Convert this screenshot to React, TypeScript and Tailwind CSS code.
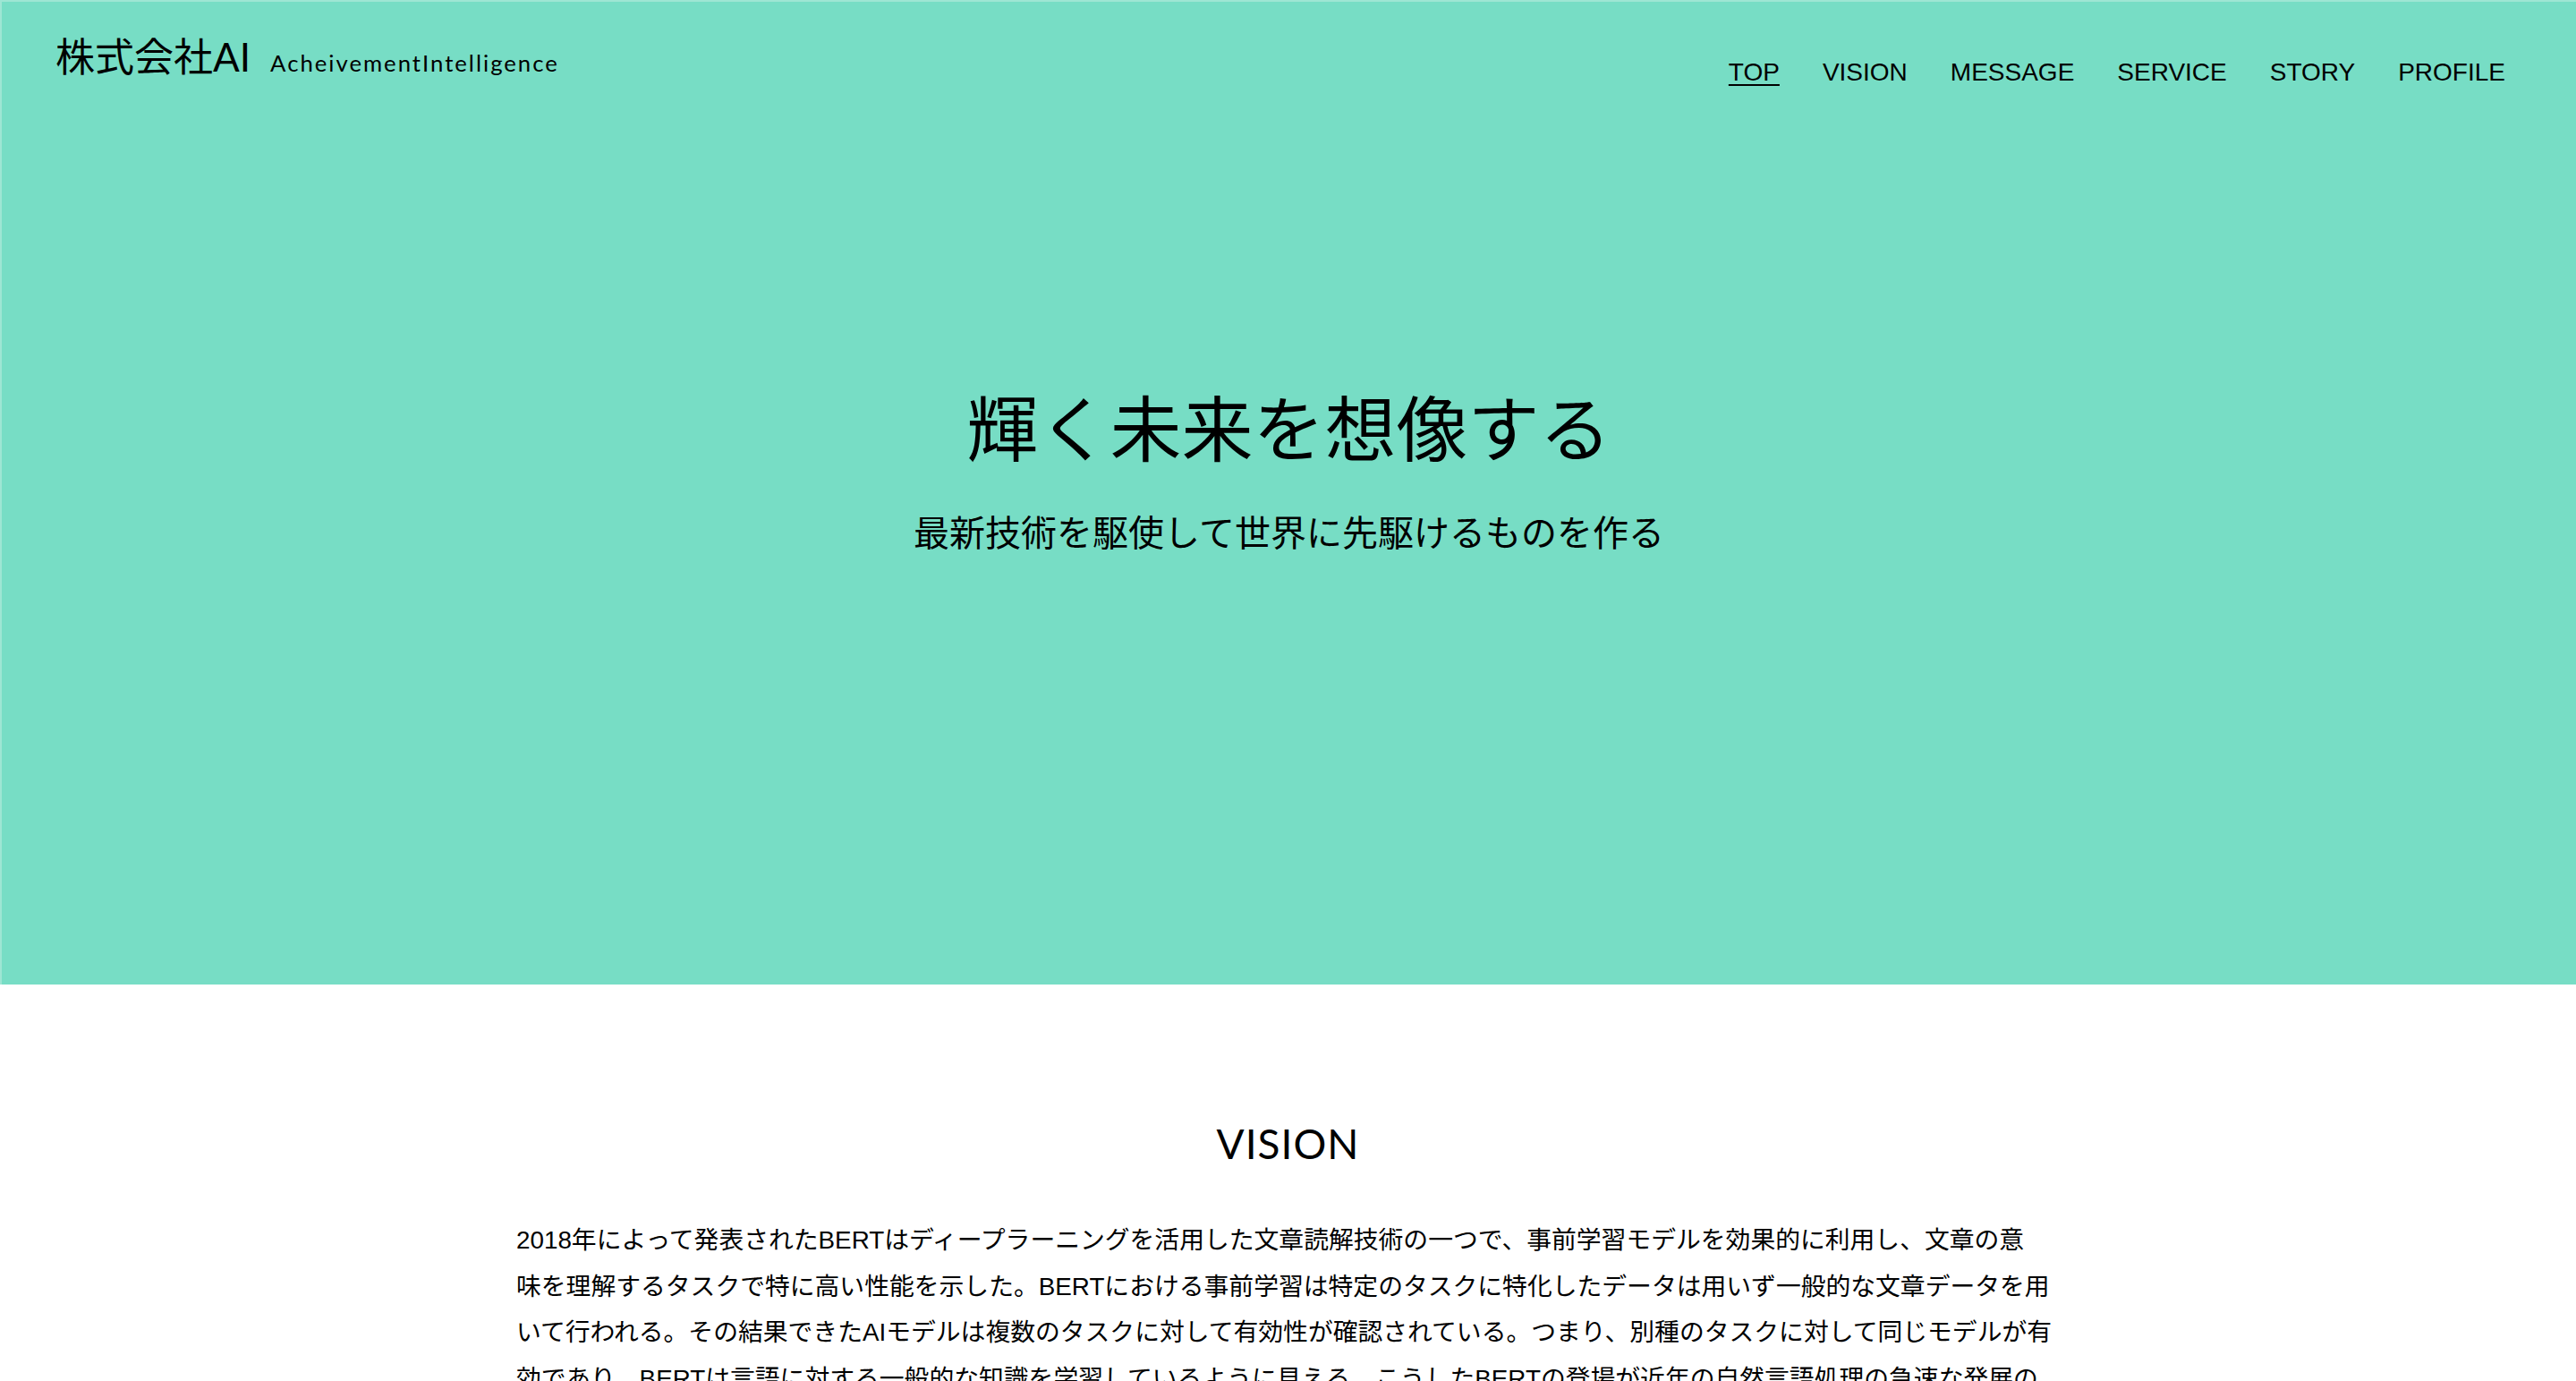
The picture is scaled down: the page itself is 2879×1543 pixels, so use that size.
const navItems = ['TOP', 'VISION', 'MESSAGE', 'SERVICE', 'STORY', 'PROFILE'];

export default function App() {
  return (
    <div className="min-h-screen bg-white text-black">
      {/* Hero */}
      <section className="flex h-[1100px] flex-col border-l-2 border-t-2 border-[#9ee6d4] bg-[#77ddc5]">
        <header className="flex items-start justify-between pl-[60px] pr-[79px] pt-[39px]">
          <div className="flex items-baseline">
            <span className="font-['Lato','Noto_Sans_CJK_JP',sans-serif] text-[44px] leading-none">
              株式会社AI
            </span>
            <span className="ml-[22px] font-['Lato',sans-serif] text-[25.7px] leading-none tracking-[2px]">
              AcheivementIntelligence
            </span>
          </div>
          <nav className="mt-[26px] flex gap-[48px] font-['Liberation_Sans',Arial,sans-serif] text-[28px] leading-none">
            {navItems.map((item, i) => (
              <a
                key={item}
                href="#"
                className={i === 0 ? 'underline decoration-2 underline-offset-[4px]' : ''}
              >
                {item}
              </a>
            ))}
          </nav>
        </header>

        <div className="mt-[339px] flex flex-col items-center font-['Noto_Sans_CJK_JP',serif]">
          <h1 className="text-[80px] font-normal leading-none">輝く未来を想像する</h1>
          <p className="mt-[59px] text-[40px] font-normal leading-none">
            最新技術を駆使して世界に先駆けるものを作る
          </p>
        </div>
      </section>

      {/* Vision */}
      <section className="pt-[155px] pb-[120px]">
        <h2 className="text-center font-['Lato',sans-serif] text-[46px] leading-none tracking-[1px]">
          VISION
        </h2>
        <p className="mx-auto mt-[59px] w-[1725px] font-['Liberation_Sans','Noto_Sans_CJK_JP',sans-serif] text-[27.8px] leading-[51.5px]">
          2018年によって発表されたBERTはディープラーニングを活用した文章読解技術の一つで、事前学習モデルを効果的に利用し、文章の意
          <br />
          味を理解するタスクで特に高い性能を示した。BERTにおける事前学習は特定のタスクに特化したデータは用いず一般的な文章データを用
          <br />
          いて行われる。その結果できたAIモデルは複数のタスクに対して有効性が確認されている。つまり、別種のタスクに対して同じモデルが有
          <br />
          効であり、BERTは言語に対する一般的な知識を学習しているように見える。こうしたBERTの登場が近年の自然言語処理の急速な発展の
          <br />
          きっかけとなった。私たちはこうした最新技術を駆使して、まだ誰も見たことのない未来を想像し、形にしていきます。
        </p>
      </section>
    </div>
  );
}
